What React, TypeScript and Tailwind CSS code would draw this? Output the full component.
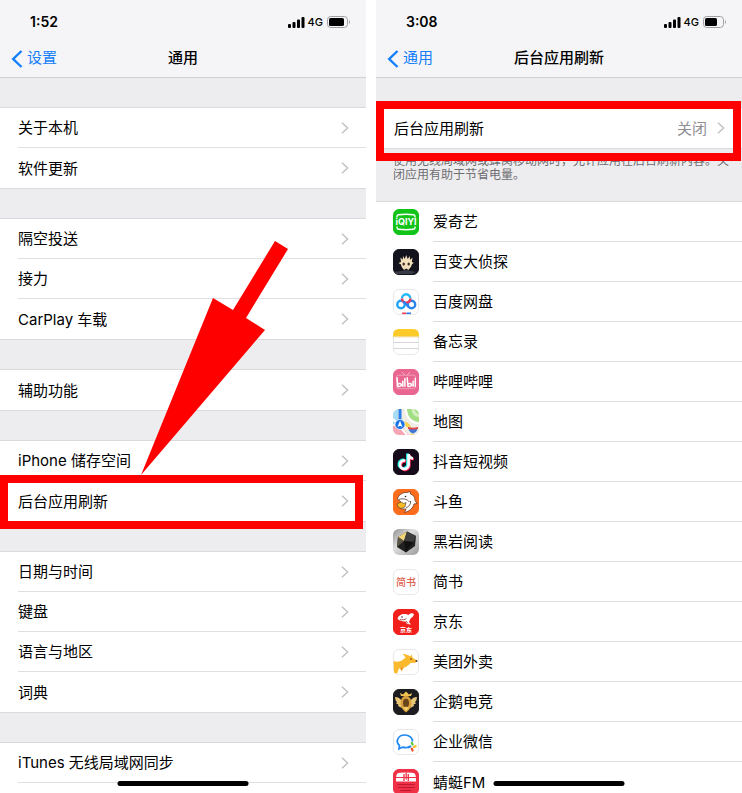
import type { ReactNode } from 'react'

type Row = {
    label: string
    value?: string
    icon?: ReactNode
    mark?: 'arrow' | 'wide'
}

const generalGroups: Row[][] = [
    [{ label: '关于本机' }, { label: '软件更新' }],
    [{ label: '隔空投送' }, { label: '接力' }, { label: 'CarPlay 车载' }],
    [{ label: '辅助功能' }],
    [{ label: 'iPhone 储存空间' }, { label: '后台应用刷新', mark: 'arrow' }],
    [{ label: '日期与时间' }, { label: '键盘' }, { label: '语言与地区' }, { label: '词典' }],
]

const syncGroup: Row[] = [{ label: 'iTunes 无线局域网同步' }]

const refreshGroup: Row[] = [{ label: '后台应用刷新', value: '关闭', mark: 'wide' }]

const apps: Row[] = [
    { label: '爱奇艺', icon: <IqiyiIcon /> },
    { label: '百变大侦探', icon: <DetectiveIcon /> },
    { label: '百度网盘', icon: <BaiduPanIcon /> },
    { label: '备忘录', icon: <NotesIcon /> },
    { label: '哔哩哔哩', icon: <BilibiliIcon /> },
    { label: '地图', icon: <MapsIcon /> },
    { label: '抖音短视频', icon: <DouyinIcon /> },
    { label: '斗鱼', icon: <DouyuIcon /> },
    { label: '黑岩阅读', icon: <HeiyanIcon /> },
    { label: '简书', icon: <JianshuIcon /> },
    { label: '京东', icon: <JdIcon /> },
    { label: '美团外卖', icon: <MeituanIcon /> },
    { label: '企鹅电竞', icon: <EgameIcon /> },
    { label: '企业微信', icon: <WeComIcon /> },
    { label: '蜻蜓FM', icon: <QingtingIcon /> },
]

export default function App() {
    return (
        <div className="grid h-screen grid-cols-2 gap-2.5 overflow-hidden bg-white font-['Inter','Noto_Sans_CJK_SC',sans-serif] text-[15px] text-black">
            <Screen time="1:52" back="设置" title="通用" charge={15}>
                <div className="flex grow flex-col gap-[29px]">
                    {generalGroups.map((rows) => (
                        <Group key={rows[0].label} rows={rows} />
                    ))}
                    <Group rows={syncGroup} open />
                </div>
            </Screen>
            <Screen time="3:08" back="通用" title="后台应用刷新" charge={12}>
                <Group rows={refreshGroup} />
                <p className="pt-[5px] pr-2 pb-[19px] pl-[17px] text-xs leading-[14px] text-[#6d6d72]">
                    使用无线局域网或蜂窝移动网时，允许应用在后台刷新内容。关闭应用有助于节省电量。
                </p>
                <Group rows={apps} />
            </Screen>
        </div>
    )
}

function Screen({ time, back, title, charge, children }: { time: string; back: string; title: string; charge: number; children: ReactNode }) {
    return (
        <section className="relative flex h-full flex-col overflow-hidden bg-[#ededef]">
            <header className="border-b border-[#d0d0d4] bg-[#f5f5f8]">
                <div className="flex h-10 items-center justify-between pt-1 pr-[15px] pl-[30px]">
                    <span className="text-sm font-semibold">{time}</span>
                    <StatusIcons charge={charge} />
                </div>
                <nav className="grid h-[37px] grid-cols-[1fr_auto_1fr] items-center px-[11px]">
                    <button type="button" className="flex items-center gap-1 justify-self-start text-[#147efb]">
                        <svg width="12" height="18" viewBox="0 0 12 18" fill="none" stroke="currentColor" strokeWidth="2.4" aria-hidden="true">
                            <path d="M10.500 1 2.200 9l8.300 8" />
                        </svg>
                        {back}
                    </button>
                    <h1 className="font-medium">{title}</h1>
                </nav>
            </header>
            <main className="flex grow flex-col pt-[29px]">{children}</main>
            {/* Home indicator */}
            <div className="absolute bottom-[7px] left-1/2 z-20 h-[5px] w-[131px] -translate-x-1/2 rounded-full bg-black" />
        </section>
    )
}

function StatusIcons({ charge }: { charge: number }) {
    return (
        <div className="flex items-center">
            <svg width="17" height="11" viewBox="0 0 17 11" aria-hidden="true">
                <rect x="0" y="7" width="3" height="4" rx="1" />
                <rect x="4.5" y="5" width="3" height="6" rx="1" />
                <rect x="9" y="2.5" width="3" height="8.5" rx="1" />
                <rect x="13.5" y="0" width="3" height="11" rx="1" />
            </svg>
            <span className="ml-[3px] text-[11px] font-medium">4G</span>
            <svg className="ml-1" width="24" height="12" viewBox="0 0 24 12" aria-hidden="true">
                <rect x="0.5" y="0.5" width="20" height="11" rx="3.2" fill="none" stroke="#a0a0a4" />
                <rect x="2" y="2" width={charge} height="8" rx="1.6" />
                <path d="M22 4c1.3.6 1.3 3.4 0 4Z" fill="#a0a0a4" />
            </svg>
        </div>
    )
}

// An open group runs on past the bottom of the screen
function Group({ rows, open }: { rows: Row[]; open?: boolean }) {
    return (
        <ul className={open ? 'grow border-t border-[#dadade] bg-white' : 'border-y border-[#dadade] bg-white'}>
            {rows.map((row, i) => (
                <li key={row.label} className="relative">
                    <a href="#" className={row.icon ? 'flex h-10 items-center pl-[17px]' : 'flex h-10 items-center pl-[18px]'}>
                        {row.icon && <span className="mr-3.5 size-[26px] shrink-0">{row.icon}</span>}
                        <span
                            className={
                                i === rows.length - 1 && !open
                                    ? 'flex h-full grow items-center pr-[17px]'
                                    : 'flex h-full grow items-center border-b border-[#dfdfe2] pr-[17px]'
                            }
                        >
                            <span className="grow pt-0.5">{row.label}</span>
                            {row.value && <span className="mr-2.5 pt-0.5 text-[#8e8e93]">{row.value}</span>}
                            {!row.icon && (
                                <svg width="8" height="12" viewBox="0 0 8 12" fill="none" stroke="#c2c2c6" strokeWidth="1.5" aria-hidden="true">
                                    <path d="m1 .7 5.6 5.3L1 11.3" />
                                </svg>
                            )}
                        </span>
                    </a>
                    {row.mark === 'arrow' && (
                        <>
                            <svg className="absolute bottom-full left-[141px] z-10 mb-1.5" width="148" height="234" viewBox="0 0 148 234" aria-hidden="true">
                                <path d="M0 234 72 57l20 12 42-69 13 8-42 69 19 12Z" fill="#f00" />
                            </svg>
                            <div className="pointer-events-none absolute -top-1.5 right-[3px] -bottom-2 left-0 z-10 border-8 border-[#f00]" />
                        </>
                    )}
                    {row.mark === 'wide' && (
                        <div className="pointer-events-none absolute -top-[7px] right-px -bottom-[13px] left-0 z-10 border-8 border-[#f00]" />
                    )}
                </li>
            ))}
        </ul>
    )
}

// App icons

function Tile({ fill, outlined, children }: { fill: string; outlined?: boolean; children: ReactNode }) {
    return (
        <svg className="size-full" viewBox="0 0 26 26" aria-hidden="true">
            <rect x="0.5" y="0.5" width="25" height="25" rx="5.5" fill={fill} stroke={outlined ? '#e8e8ea' : fill} />
            {children}
        </svg>
    )
}

function IqiyiIcon() {
    return (
        <Tile fill="#12c31a">
            <path d="M4 8.500V7.300c0-1 .6-1.500 1.500-1.600 5-.6 10-.6 15 0 .9.1 1.500.6 1.500 1.600v1.200" fill="none" stroke="#fff" strokeWidth="1.400" />
            <path d="M4 17.500v1.200c0 1 .6 1.500 1.500 1.600 5 .6 10 .6 15 0 .9-.1 1.500-.6 1.500-1.600v-1.200" fill="none" stroke="#fff" strokeWidth="1.400" />
            <text x="13" y="16.300" textAnchor="middle" fill="#fff" fontSize="9" fontWeight="700">iQIYI</text>
        </Tile>
    )
}

function DetectiveIcon() {
    return (
        <Tile fill="#12131c">
            <path d="M1 23 14 21l9 2-4 2H6q-4 0-5-2Z" fill="#383a46" />
            <path d="m8 13-.6-4.500 2.300 2.200L10 7l1.800 3 1.400-4 1.500 4 2-3 .3 3.700 2.500-2-.7 4.300 2 .8-2 1.700c-.4 2.500-2.500 4-3.300 5.500L13.200 19.500 11 21c-1-1.500-2.700-3-3-5.500L5.500 14Z" fill="#f4dfbd" />
            <ellipse cx="10.700" cy="15" rx="1.200" ry="1.500" fill="#35251d" />
            <ellipse cx="15.700" cy="15" rx="1.200" ry="1.500" fill="#35251d" />
        </Tile>
    )
}

function BaiduPanIcon() {
    return (
        <Tile fill="#fff" outlined>
            <g fill="none" strokeWidth="2.400">
                <circle cx="8" cy="15.500" r="3.700" stroke="#20a3f5" />
                <circle cx="18.500" cy="15.500" r="3.700" stroke="#2a84f0" />
                <path d="M9 9.500a4.200 4.200 0 0 1 8.400 0" stroke="#20b8f5" />
                <path d="M17.400 9.500a4.200 4.200 0 0 1-8.400 0" stroke="#ee3b5c" />
                <path d="m10.500 12.700 5.300 5.300" stroke="#2a84f0" />
            </g>
            <path d="M9 24.300h4.500" stroke="#ef3d54" strokeWidth="1.600" />
            <path d="M13.500 24.300H18" stroke="#2a7ff0" strokeWidth="1.600" />
        </Tile>
    )
}

function NotesIcon() {
    return (
        <Tile fill="#fff" outlined>
            <path d="M0 7.500V6q0-6 6-6h14q6 0 6 6v1.500Z" fill="#fccb2a" />
            <path d="M0 8h26" stroke="#d8b95c" strokeDasharray="1 .6" strokeWidth=".7" />
            <path d="M.5 13.500h25M.5 19.500h25" stroke="#d6d6d9" />
        </Tile>
    )
}

function BilibiliIcon() {
    return (
        <Tile fill="#e8668f">
            <path d="m9 3 3 3.200M17 3l-3 3.200" stroke="#f7b3c9" />
            <rect x="3.500" y="6.200" width="19" height="13.500" rx="2" fill="none" stroke="#f39cb8" />
            <g fill="none" stroke="#fff" strokeWidth="1.500" strokeLinecap="round" strokeLinejoin="round">
                <path d="m4 8.700.8 8.700c2 .3 4-.5 3.500-2-.4-1.200-2-1-3.300-.5M9.800 12.300v5M11.900 9.500v7.800M14.200 8.700l.8 8.700c2 .3 4-.5 3.500-2-.4-1.200-2-1-3.300-.5M20.100 12.300v5M22.300 9.500v7.800" />
            </g>
        </Tile>
    )
}

function MapsIcon() {
    return (
        <svg className="size-full" viewBox="0 0 26 26" aria-hidden="true">
            <clipPath id="maps-tile">
                <rect width="26" height="26" rx="6" />
            </clipPath>
            <g clipPath="url(#maps-tile)">
                <rect width="26" height="26" fill="#efede4" />
                <path d="M0 0h5v15H0Z" fill="#a6dcf4" />
                <path d="M0 17h8l8 9H0Z" fill="#f7a5b5" />
                <path d="M14 0h12v13C19 12 14 8 14 0Z" fill="#a2de83" />
                <path d="M13 0c0 9 6 14.500 14 14.500" fill="none" stroke="#fff" strokeWidth="2" />
                <path d="M20-1q0 7 7 8" fill="none" stroke="#d6efc2" strokeWidth="3" />
                <path d="m0 10 14 16" stroke="#fff" strokeWidth="2" />
                <path d="M10 14c4 0 8 5 10 12" fill="none" stroke="#fbd04a" strokeWidth="3.500" />
                <path d="M7 0v14" stroke="#2b7de9" strokeWidth="3" />
                <circle cx="7" cy="15.500" r="5" fill="#1c74e8" stroke="#fff" strokeWidth=".7" />
                <path d="m7 11.800 2.500 6.200L7 16.800 4.500 18Z" fill="#fff" />
                <path d="M15 18q5 1.500 10 0l-.5 3q-.5 2.500-4.500 4-4-1.500-4.500-4Z" fill="#3f78d6" stroke="#fff" strokeWidth=".7" />
                <path d="M15 18q5 1.500 10 0v2q-5 1-10 0Z" fill="#e74745" />
            </g>
        </svg>
    )
}

function DouyinIcon() {
    const note = 'M12.300 11.600a4.300 4.300 0 1 0 3.300 4.300V5.200c.4 2.600 2 4 4.400 4.200'
    return (
        <Tile fill="#160b1a">
            <g fill="none" strokeWidth="2.600">
                <path d={note} stroke="#25f4ee" transform="translate(-1.200 -.7)" />
                <path d={note} stroke="#fe2c55" transform="translate(.8 .8)" />
                <path d={note} stroke="#fff" />
            </g>
        </Tile>
    )
}

function DouyuIcon() {
    return (
        <Tile fill="#fb6c1c">
            <path d="M4.500 10c1-4 5-7 9.500-6.500L17 2.500l.5 2.500c3 1 4.500 3.500 4.500 6.500l2 3-3 .5c-1 4-4.500 7.500-9.500 8.500l1.500-3.500c-3 .5-6-.5-8-3l3-4Z" fill="#fff" stroke="#5b2b13" strokeWidth=".7" />
            <path d="M6 10.500c4-1.500 8-.5 10.500 2.500M17.500 12c.5 3-1.500 5.500-4.500 7" fill="none" stroke="#49362e" strokeWidth=".8" />
            <path d="m4 15 4-2 3 1.500 2-1-1 4.500-4 1.500-3-1.500Z" fill="#f8bd24" stroke="#49362e" strokeWidth=".6" />
            <circle cx="12.500" cy="7.500" r=".8" fill="#2e2523" />
        </Tile>
    )
}

function HeiyanIcon() {
    return (
        <svg className="size-full" viewBox="0 0 26 26" aria-hidden="true">
            <linearGradient id="heiyan-bg" x1="0" y1="0" x2="1" y2="1">
                <stop offset="0" stopColor="#8f8f8f" />
                <stop offset=".4" stopColor="#dedede" />
                <stop offset="1" stopColor="#9b9b9b" />
            </linearGradient>
            <rect width="26" height="26" rx="6" fill="url(#heiyan-bg)" />
            <path d="m14 2.500 9 4.500-1 10-9 6.500L4 18 5 8Z" fill="#202020" />
            <path d="m14 2.500-3 9.500-6-4Z" fill="#f2d479" />
            <path d="M14 2.500 11 12l9 1 3-6Z" fill="#3e3e3e" />
            <path d="m11 12 9 1-7 10.500Z" fill="#111" />
            <path d="m5 8 6 4-7 6Z" fill="#5b5546" />
        </svg>
    )
}

function JianshuIcon() {
    return (
        <Tile fill="#fff" outlined>
            <text x="13" y="16.800" textAnchor="middle" fill="#de5f4e" fontSize="10" fontWeight="500">简书</text>
        </Tile>
    )
}

function JdIcon() {
    return (
        <Tile fill="#f2201b">
            <path d="M4.500 10c.5-3 3.500-5 7-5 2 0 3 .5 4 1 1.200-1.500 3.500-2.300 5.500-1-.5 3-2.200 3.500-3.500 4.500l-1.500 3.500 2 2.500-4-.5-1.500-2.500c-2.500 0-5.500-.3-8-2.500Z" fill="#fff" />
            <path d="M7 10.500c2.500.7 5 .2 6.500-1M13 12l2 2.500" fill="none" stroke="#8c3b36" strokeWidth=".8" />
            <circle cx="9" cy="8" r=".8" fill="#512" />
            <text x="13" y="23" textAnchor="middle" fill="#fff" fontSize="6" fontWeight="700">京东</text>
        </Tile>
    )
}

function MeituanIcon() {
    return (
        <Tile fill="#fff" outlined>
            <path d="M.6 12c4 1.500 8 .5 12-3.500L9.500 4.500l4.500 1.300 3.500 1.400 1.500-2 .3 3.200 4.700 3-1.500 2.300-5 .3c-3 3.500-6 5-11.500 5.500L4 24.500l-3-.8Z" fill="#fbb92e" />
            <path d="m7 19 4-1-2.500 4.500" fill="#ed9420" />
            <circle cx="18" cy="10" r=".8" fill="#51361d" />
            <circle cx="23.500" cy="12" r="1" fill="#51361d" />
        </Tile>
    )
}

function EgameIcon() {
    return (
        <Tile fill="#1d1d21">
            <path d="m8 7-1-3 3 1.500L13 2.500l3 3L19 4l-1 3Z" fill="#f3c450" />
            <path d="M2 8q4 0 6 3l1 8-4-2 .5-1.500L3 14.500l1-1.200Q2 11.500 2 8ZM24 8q-4 0-6 3l-1 8 4-2-.5-1.500 2.500-1-1-1.200Q24 11.500 24 8Z" fill="#e9c778" />
            <path d="M13 6.500q5.500 1.500 5.500 7.500c0 4-2 7-5.500 9.500-3.500-2.500-5.500-5.500-5.500-9.500q0-6 5.500-7.500Z" fill="#d89f3a" />
            <ellipse cx="13" cy="14" rx="3" ry="4.200" fill="#69451b" />
            <path d="m10 19 3-1.500 3 1.500-3 3Z" fill="#f2cd6c" />
        </Tile>
    )
}

function WeComIcon() {
    return (
        <Tile fill="#fff" outlined>
            <path d="M15.500 18.200c-2 .6-4 .5-5.800-.1L6 19.800l.5-3.300C2 12.500 5 6 11.800 6c4.500 0 7.700 3 7.700 6.500" fill="none" stroke="#1e88f5" strokeWidth="1.700" />
            <g strokeWidth="2.200" strokeLinecap="round">
                <path d="m18.800 13.800.8 1.800" stroke="#5cc63d" />
                <path d="m22.700 17.200-1.800.8" stroke="#f9bd23" />
                <path d="m19.600 21.500-.8-1.800" stroke="#f44e32" />
                <path d="m15.500 18.300 1.700-.8" stroke="#2484ed" />
            </g>
        </Tile>
    )
}

function QingtingIcon() {
    return (
        <Tile fill="#ef3046">
            <path d="M3 10.500q0-5 1.500-6t8.500-1 8.500 1 1.500 6v2H3Z" fill="#fff" />
            <path d="M3 8.500h20" stroke="#ef3046" />
            <path d="M11 5v7M13.200 3.500v7M15.300 5v7" stroke="#ef3046" strokeWidth="1.300" />
            <path d="M4.500 15.500h17M4.500 18.500h17M7.500 21.500h11" stroke="#bd1930" />
        </Tile>
    )
}
